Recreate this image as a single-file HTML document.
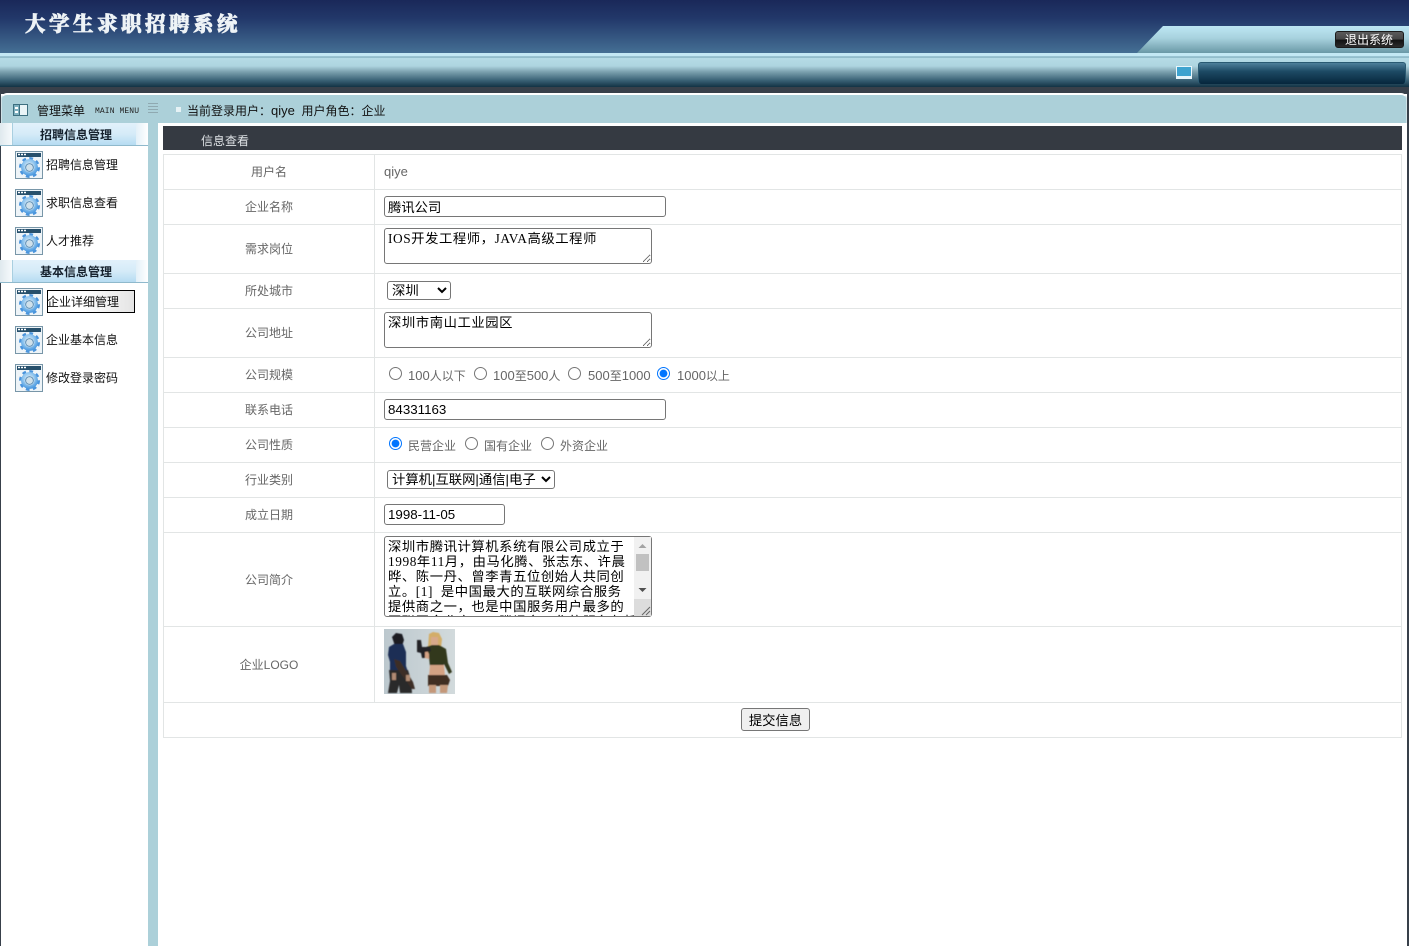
<!DOCTYPE html>
<html lang="zh"><head><meta charset="utf-8"><title>大学生求职招聘系统</title>
<style>
html,body{margin:0;padding:0;width:1409px;height:946px;overflow:hidden;background:#fff}
body{position:relative;font:12px "Liberation Sans","Noto Sans CJK SC",sans-serif;color:#666}
.a{position:absolute}
.t{position:absolute;white-space:nowrap;line-height:18px}
.hl{position:absolute;left:163px;width:1239px;height:1px;background:#e2e5e5}
.lab{position:absolute;left:164px;width:210px;text-align:center;color:#666;font-size:12px;line-height:18px}
.menu{position:absolute;left:46px;color:#111;font-size:12px;line-height:18px;white-space:nowrap}
.hd{position:absolute;left:0;width:148px;height:23px;background:linear-gradient(90deg,#dfe9ee,#f6fafc 12px,#e3f0f8 136px,#fff);border-bottom:1px solid #8fb9cc;box-sizing:border-box}
.hd i{position:absolute;left:12px;top:0;width:124px;height:100%;background:linear-gradient(#e2f1fb,#d5ebf8 50%,#b6dcf2);border-left:1px solid #a9cfe0;box-sizing:border-box}
.hd b{position:absolute;left:0;width:152px;text-align:center;top:3px;font-size:12px;line-height:18px;color:#16222e}
.ic{position:absolute;left:15px;width:28px;height:28px}
input,textarea,select,button{position:absolute;margin:0;box-sizing:border-box;font-family:"Liberation Sans","Noto Sans CJK SC",sans-serif}
input[type=text]{border:1px solid #767676;border-radius:3px;background:#fff;font-size:13.33px;padding:1px 3px;color:#000;height:21px}
textarea{border:1px solid #767676;border-radius:3px;background:#fff;font:13.33px/15px "Liberation Serif","WenQuanYi Zen Hei","Noto Sans CJK SC",serif;letter-spacing:.57px;padding:2px 3px 0;color:#000;resize:both;outline:0;white-space:pre;overflow:hidden}
select{font-size:13.33px;height:19px;background:#fff;border:1px solid #767676;border-radius:3px;color:#000}
input[type=radio]{width:13px;height:13px}
.r{position:absolute;white-space:nowrap;color:#666;font-size:12px;line-height:18px}
.r span,.n{font-size:13px}
</style></head><body>

<!-- header -->
<div class="a" style="left:0;top:0;width:1409px;height:53px;background:linear-gradient(#1a2859,#22386a 35%,#446f94)"></div>
<div class="t" style="left:25px;top:8px;font:900 20.5px/28px 'Noto Serif CJK SC',serif;letter-spacing:3.5px;color:#eef3f6;-webkit-text-stroke:.7px #eef3f6">大学生求职招聘系统</div>
<svg class="a" style="left:1137px;top:26px" width="272" height="27"><defs><linearGradient id="g1" x1="0" y1="0" x2="0" y2="1"><stop offset="0" stop-color="#bde7f4"/><stop offset=".45" stop-color="#a8d2de"/><stop offset="1" stop-color="#6a98a6"/></linearGradient></defs><path d="M26 0H272V27H0Z" fill="url(#g1)"/></svg>
<div class="a" style="left:1335px;top:31px;width:69px;height:17px;border-radius:3px;background:linear-gradient(#5a5a5a,#444 50%,#111 52%,#2b2b2b);border:1px solid #1a1a1a;box-sizing:border-box"></div>
<div class="t" style="left:1345px;top:32px;color:#fff;font-size:12px;line-height:17px">退出系统</div>

<div class="a" style="left:0;top:53px;width:1409px;height:35px;background:linear-gradient(#c3e8f4 0,#c3e8f4 3px,#6f9fb0 4px,#b5dbe6 5px,#aed5e0 13px,#7a9fad 19px,#3c6478 27px,#123244 34px)"></div>
<div class="a" style="left:0;top:87px;width:1409px;height:7px;background:#38404a"></div>
<svg class="a" style="left:1176px;top:66px" width="17" height="14"><rect x=".5" y=".5" width="15" height="10" fill="#3ea3cf" stroke="#e8f6fb"/><rect x="0" y="11" width="16" height="2" fill="#e8f6fb"/></svg>
<div class="a" style="left:1198px;top:62px;width:208px;height:22px;border-radius:3px;background:linear-gradient(#4e7f9a,#1d4a64 40%,#06263c);border:1px solid #2a5a72;border-bottom:0;box-sizing:border-box"></div>

<!-- blue panel -->
<div class="a" style="left:1px;top:93px;width:1406px;height:853px;background:#acd0d9;border-top:2px solid #fff;border-left:1px solid #cfe2e7;border-right:1px solid #cfe2e7;border-radius:6px 6px 0 0;box-sizing:border-box"></div>
<div class="a" style="left:0;top:94px;width:1px;height:852px;background:#38404a"></div>
<div class="a" style="left:1407px;top:94px;width:2px;height:852px;background:#38404a"></div>

<svg class="a" style="left:13px;top:104px" width="16" height="13"><rect x=".5" y=".5" width="14" height="11" fill="#e9f4f7" stroke="#3d6f80"/><rect x="1" y="1" width="5" height="10" fill="#7fb0bf"/><rect x="2" y="3" width="3" height="2" fill="#fff"/><rect x="2" y="7" width="3" height="2" fill="#fff"/><path d="M6.5 1v10" stroke="#3d6f80"/></svg>
<div class="t" style="left:37px;top:102px;color:#111;font-size:12px">管理菜单</div>
<div class="t" style="left:95px;top:104px;color:#222;font:8px/16px 'Liberation Mono',monospace;letter-spacing:.1px">MAIN MENU</div>
<svg class="a" style="left:148px;top:102px" width="11" height="13"><path d="M0 1.5h10M0 4.5h10M0 7.5h10M0 10.5h10" stroke="#8fa9b1"/></svg>
<div class="a" style="left:176px;top:107px;width:5px;height:5px;background:#e6f2f5"></div>
<div class="t" style="left:187px;top:102px;color:#111;font-size:12px">当前登录用户：<span class="n">qiye</span>&nbsp; 用户角色：企业</div>

<!-- sidebar -->
<div class="a" style="left:1px;top:123px;width:147px;height:823px;background:#fff"></div>
<div class="hd" style="top:123px"><i></i><b>招聘信息管理</b></div>
<div class="hd" style="top:260px"><i></i><b>基本信息管理</b></div>

<svg width="0" height="0" style="position:absolute"><defs>
<radialGradient id="gg" cx=".45" cy=".35" r=".75"><stop offset="0" stop-color="#d4eafa"/><stop offset=".6" stop-color="#8ec4ee"/><stop offset="1" stop-color="#4d9ae0"/></radialGradient>
<symbol id="gear" viewBox="0 0 28 28">
<rect x=".5" y=".5" width="27" height="27" fill="#eef4f8" stroke="#7896a8"/>
<rect x="2" y="2" width="24" height="4" fill="#27506c"/>
<path d="M3 3.5h2M6 3.5h2M9 3.5h2" stroke="#fff" stroke-width="1.4"/>
<circle cx="14.5" cy="16.5" r="9" fill="none" stroke="#4a94dc" stroke-width="3" stroke-dasharray="3.6 3.4"/>
<circle cx="14.5" cy="16.5" r="6.6" fill="none" stroke="url(#gg)" stroke-width="3.6"/>
<circle cx="14.5" cy="16.5" r="3.9" fill="#cfe0ea" stroke="#5b8fb8" stroke-width="1"/>
</symbol></defs></svg>
<svg class="ic" style="top:151px"><use href="#gear"/></svg>
<svg class="ic" style="top:189px"><use href="#gear"/></svg>
<svg class="ic" style="top:227px"><use href="#gear"/></svg>
<svg class="ic" style="top:288px"><use href="#gear"/></svg>
<svg class="ic" style="top:326px"><use href="#gear"/></svg>
<svg class="ic" style="top:364px"><use href="#gear"/></svg>
<div class="menu" style="top:156px">招聘信息管理</div>
<div class="menu" style="top:194px">求职信息查看</div>
<div class="menu" style="top:232px">人才推荐</div>
<div class="a" style="left:47px;top:290px;width:88px;height:23px;border:1px solid #000;box-sizing:border-box;background:linear-gradient(90deg,#fff 40%,#e4e4e4)"></div>
<div class="menu" style="top:293px;left:47px">企业详细管理</div>
<div class="menu" style="top:331px">企业基本信息</div>
<div class="menu" style="top:369px">修改登录密码</div>

<!-- main -->
<div class="a" style="left:158px;top:123px;width:1249px;height:823px;background:#fff"></div>
<div class="a" style="left:163px;top:126px;width:1239px;height:24px;background:#353a42"></div>
<div class="t" style="left:201px;top:132px;color:#dfe3e6;font-size:12px">信息查看</div>

<div class="a" style="left:163px;top:154px;width:1px;height:584px;background:#e2e5e5"></div>
<div class="a" style="left:374px;top:154px;width:1px;height:549px;background:#e2e5e5"></div>
<div class="a" style="left:1401px;top:154px;width:1px;height:584px;background:#e2e5e5"></div>
<div class="hl" style="top:154px"></div><div class="hl" style="top:189px"></div><div class="hl" style="top:224px"></div><div class="hl" style="top:273px"></div><div class="hl" style="top:308px"></div><div class="hl" style="top:357px"></div><div class="hl" style="top:392px"></div><div class="hl" style="top:427px"></div><div class="hl" style="top:462px"></div><div class="hl" style="top:497px"></div><div class="hl" style="top:532px"></div><div class="hl" style="top:626px"></div><div class="hl" style="top:702px"></div><div class="hl" style="top:737px"></div>

<div class="lab" style="top:163px">用户名</div>
<div class="lab" style="top:198px">企业名称</div>
<div class="lab" style="top:240px">需求岗位</div>
<div class="lab" style="top:282px">所处城市</div>
<div class="lab" style="top:324px">公司地址</div>
<div class="lab" style="top:366px">公司规模</div>
<div class="lab" style="top:401px">联系电话</div>
<div class="lab" style="top:436px">公司性质</div>
<div class="lab" style="top:471px">行业类别</div>
<div class="lab" style="top:506px">成立日期</div>
<div class="lab" style="top:571px">公司简介</div>
<div class="lab" style="top:656px">企业LOGO</div>

<div class="r" style="left:384px;top:163px"><span>qiye</span></div>
<input type="text" value="腾讯公司" style="left:384px;top:196px;width:282px">
<textarea style="left:384px;top:228px;width:268px;height:36px">IOS开发工程师，JAVA高级工程师</textarea>
<select style="left:387px;top:281px;width:64px"><option>深圳</option></select>
<textarea style="left:384px;top:312px;width:268px;height:36px">深圳市南山工业园区</textarea>

<input type="radio" name="a" style="left:389px;top:367px"><div class="r" style="left:408px;top:367px"><span>100</span>人以下</div>
<input type="radio" name="a" style="left:474px;top:367px"><div class="r" style="left:493px;top:367px"><span>100</span>至<span>500</span>人</div>
<input type="radio" name="a" style="left:568px;top:367px"><div class="r" style="left:588px;top:367px"><span>500</span>至<span>1000</span></div>
<input type="radio" name="a" checked style="left:657px;top:367px"><div class="r" style="left:677px;top:367px"><span>1000</span>以上</div>

<input type="text" value="84331163" style="left:384px;top:399px;width:282px">

<input type="radio" name="b" checked style="left:389px;top:437px"><div class="r" style="left:408px;top:437px">民营企业</div>
<input type="radio" name="b" style="left:465px;top:437px"><div class="r" style="left:484px;top:437px">国有企业</div>
<input type="radio" name="b" style="left:541px;top:437px"><div class="r" style="left:560px;top:437px">外资企业</div>

<select style="left:387px;top:470px;width:168px"><option>计算机|互联网|通信|电子</option></select>
<input type="text" value="1998-11-05" style="left:384px;top:504px;width:121px">
<textarea style="left:384px;top:536px;width:268px;height:81px">深圳市腾讯计算机系统有限公司成立于
1998年11月，由马化腾、张志东、许晨
晔、陈一丹、曾李青五位创始人共同创
立。[1]  是中国最大的互联网综合服务
提供商之一，也是中国服务用户最多的
互联网企业之一。腾讯多元化的服务包括</textarea>
<!-- scrollbar -->
<div class="a" style="left:634px;top:537px;width:17px;height:79px;background:#f1f1f1;border-radius:0 0 2px 0"></div>
<div class="a" style="left:636px;top:554px;width:13px;height:17px;background:#c1c1c1"></div>
<svg class="a" style="left:638px;top:543px" width="9" height="6"><path d="M0.5 5L4.5 1L8.5 5Z" fill="#a3a3a3"/></svg>
<svg class="a" style="left:638px;top:587px" width="9" height="6"><path d="M0.5 1L4.5 5L8.5 1Z" fill="#505050"/></svg>
<div class="a" style="left:634px;top:599px;width:17px;height:17px;background:#dcdcdc"></div>
<svg class="a" style="left:641px;top:605px" width="10" height="11"><path d="M1 10L9 2M5 10L9 6" stroke="#666" stroke-width="1"/></svg>

<svg class="a" style="left:384px;top:629px" width="71" height="65" viewBox="0 0 71 65">
<defs><filter id="bl"><feGaussianBlur stdDeviation=".6"/></filter><linearGradient id="bg" x1="0" y1="0" x2="1" y2="0"><stop offset="0" stop-color="#bcc8ce"/><stop offset="1" stop-color="#d2dadc"/></linearGradient></defs>
<rect width="71" height="65" fill="url(#bg)"/>
<g filter="url(#bl)">
<!-- left figure -->
<path d="M8 8l4-4 6 1 2 6-2 6-7 0z" fill="#1a1b22"/>
<path d="M5 18l5-3 9 0 3 8 0 14 2 6H6l0-10-2-7z" fill="#1f2f55"/>
<path d="M5 41h19l3 10 1 13H16l-1-8-2 8H4l2-12z" fill="#2c2a2c"/>
<path d="M10 30l6 2 13 21 2 7-3 0-16-22z" fill="#3d2e28"/>
<path d="M8 44h4v7H8zM22 46h4v6h-4z" fill="#b08a72"/>
<!-- right figure -->
<path d="M45 5l4-2 6 1 3 6-1 9-3-3-7 0-3 2z" fill="#d3ad68"/>
<path d="M47 8h7v9h-7z" fill="#d8a98a"/>
<path d="M42 18l6-2 7 0 7 4 2 14 4 9-3 2-5-10-1 3H46l-1-10-3-3z" fill="#33381f"/>
<path d="M36 18l6 1 3 6 0 5-4-1-5-7z" fill="#d4a284"/>
<path d="M46 36h14l1 11H45z" fill="#d4a284"/>
<path d="M44 46h19l3 5-2 6H44z" fill="#3f2f24"/>
<path d="M45 56h7l0 8h-7zM56 56h8l-1 8h-7z" fill="#c4987a"/>
<!-- gun -->
<path d="M33 11l4 0 1 7 8 0 1 4-6 1 0 6-3 0-1-5-4-1z" fill="#222226"/>
</g>
</svg>

<button style="left:741px;top:708px;width:69px;height:23px;font-size:13.33px;color:#000;background:#efefef;border:1px solid #767676;border-radius:3px;padding:0">提交信息</button>

</body></html>
